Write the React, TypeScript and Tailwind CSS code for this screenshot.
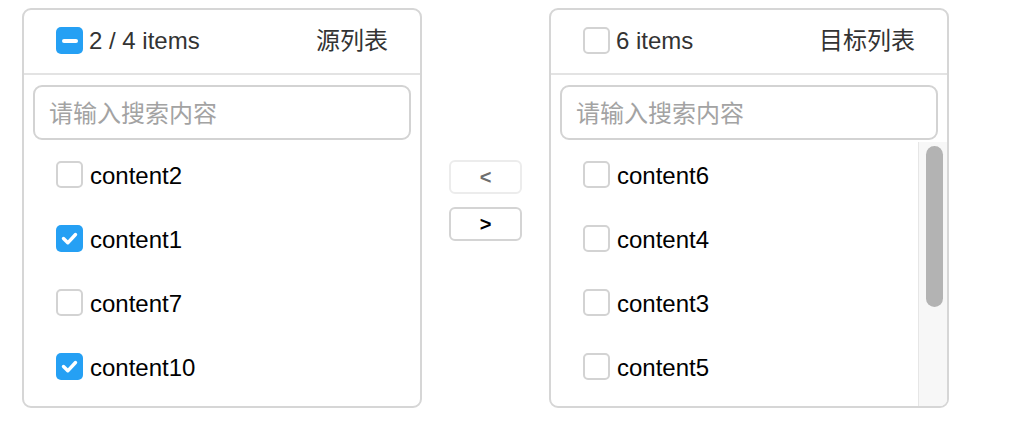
import React from "react";

const FONT = { fontFamily: '"Liberation Sans", "Noto Sans CJK SC", Arial, sans-serif' };

function Box({ state }: { state: "none" | "checked" | "half" }) {
  if (state === "none") {
    return <span className="w-[27px] h-[27px] rounded-[5px] border-2 border-[#d3d3d3] bg-white shrink-0" />;
  }
  return (
    <span className="w-[27px] h-[27px] rounded-[5px] bg-[#25a0f4] shrink-0 flex items-center justify-center">
      {state === "checked" ? (
        <svg width="19" height="19" viewBox="0 0 19 19">
          <path d="M3.5 9.5 L7.8 13.8 L15.5 5.5" fill="none" stroke="white" strokeWidth="3.4" strokeLinecap="round" strokeLinejoin="round" />
        </svg>
      ) : (
        <span className="w-[16px] h-[4px] rounded-[2px] bg-white" />
      )}
    </span>
  );
}

function Panel({
  head,
  title,
  count,
  items,
  scroll,
}: {
  head: "none" | "half";
  title: string;
  count: string;
  items: { label: string; checked: boolean }[];
  scroll?: boolean;
}) {
  return (
    <div className="w-[400px] h-[400px] border-2 border-[#d6d6d6] rounded-[9px] bg-white flex flex-col overflow-hidden">
      <div className="h-[65px] shrink-0 border-b-2 border-[#e3e3e3] flex items-center justify-between pl-[32px] pr-[32px] pb-[2px]">
        <div className="flex items-center gap-[6px]">
          <Box state={head} />
          <span className="text-[24px] text-[#333]">{count}</span>
        </div>
        <span className="text-[24px] text-[#333]">{title}</span>
      </div>
      <div className="pt-[10px] px-[9px] pb-[2px] shrink-0">
        <div className="h-[55px] border-2 border-[#d3d3d3] rounded-[9px] flex items-center pl-[14px] pt-[2px] text-[24px] text-[#a3a3a3]">
          请输入搜索内容
        </div>
      </div>
      <div className="flex flex-1 min-h-0">
        <div className="flex-1 flex flex-col overflow-hidden">
          {items.map((it) => (
            <div key={it.label} className="h-[64px] shrink-0 flex items-center pl-[32px] gap-[7px]">
              <Box state={it.checked ? "checked" : "none"} />
              <span className="text-[24px] text-black pt-[3px]">{it.label}</span>
            </div>
          ))}
        </div>
        {scroll && (
          <div className="w-[29px] shrink-0 border-l border-[#e6e6e6] bg-[#f7f7f7] pt-[4px] pl-[7px] pr-[5px]">
            <div className="w-[17px] h-[161px] rounded-full bg-[#b3b3b3]" />
          </div>
        )}
      </div>
    </div>
  );
}

export default function App() {
  return (
    <div className="w-[1012px] h-[428px] bg-white" style={FONT}>
      <div className="flex items-start pl-[22px] pt-[8px]">
        <Panel
          head="half"
          title="源列表"
          count="2 / 4 items"
          items={[
            { label: "content2", checked: false },
            { label: "content1", checked: true },
            { label: "content7", checked: false },
            { label: "content10", checked: true },
          ]}
        />
        <div className="flex flex-col gap-[13px] mt-[152px] mx-[27px]">
          <div className="w-[73px] h-[34px] rounded-[6px] border-2 border-[#ececec] flex items-center justify-center text-[20px] font-bold text-[#6e6e6e]">
            &lt;
          </div>
          <div className="w-[73px] h-[34px] rounded-[6px] border-2 border-[#d4d4d4] flex items-center justify-center text-[20px] font-bold text-black">
            &gt;
          </div>
        </div>
        <Panel
          head="none"
          title="目标列表"
          count="6 items"
          scroll
          items={[
            { label: "content6", checked: false },
            { label: "content4", checked: false },
            { label: "content3", checked: false },
            { label: "content5", checked: false },
          ]}
        />
      </div>
    </div>
  );
}
